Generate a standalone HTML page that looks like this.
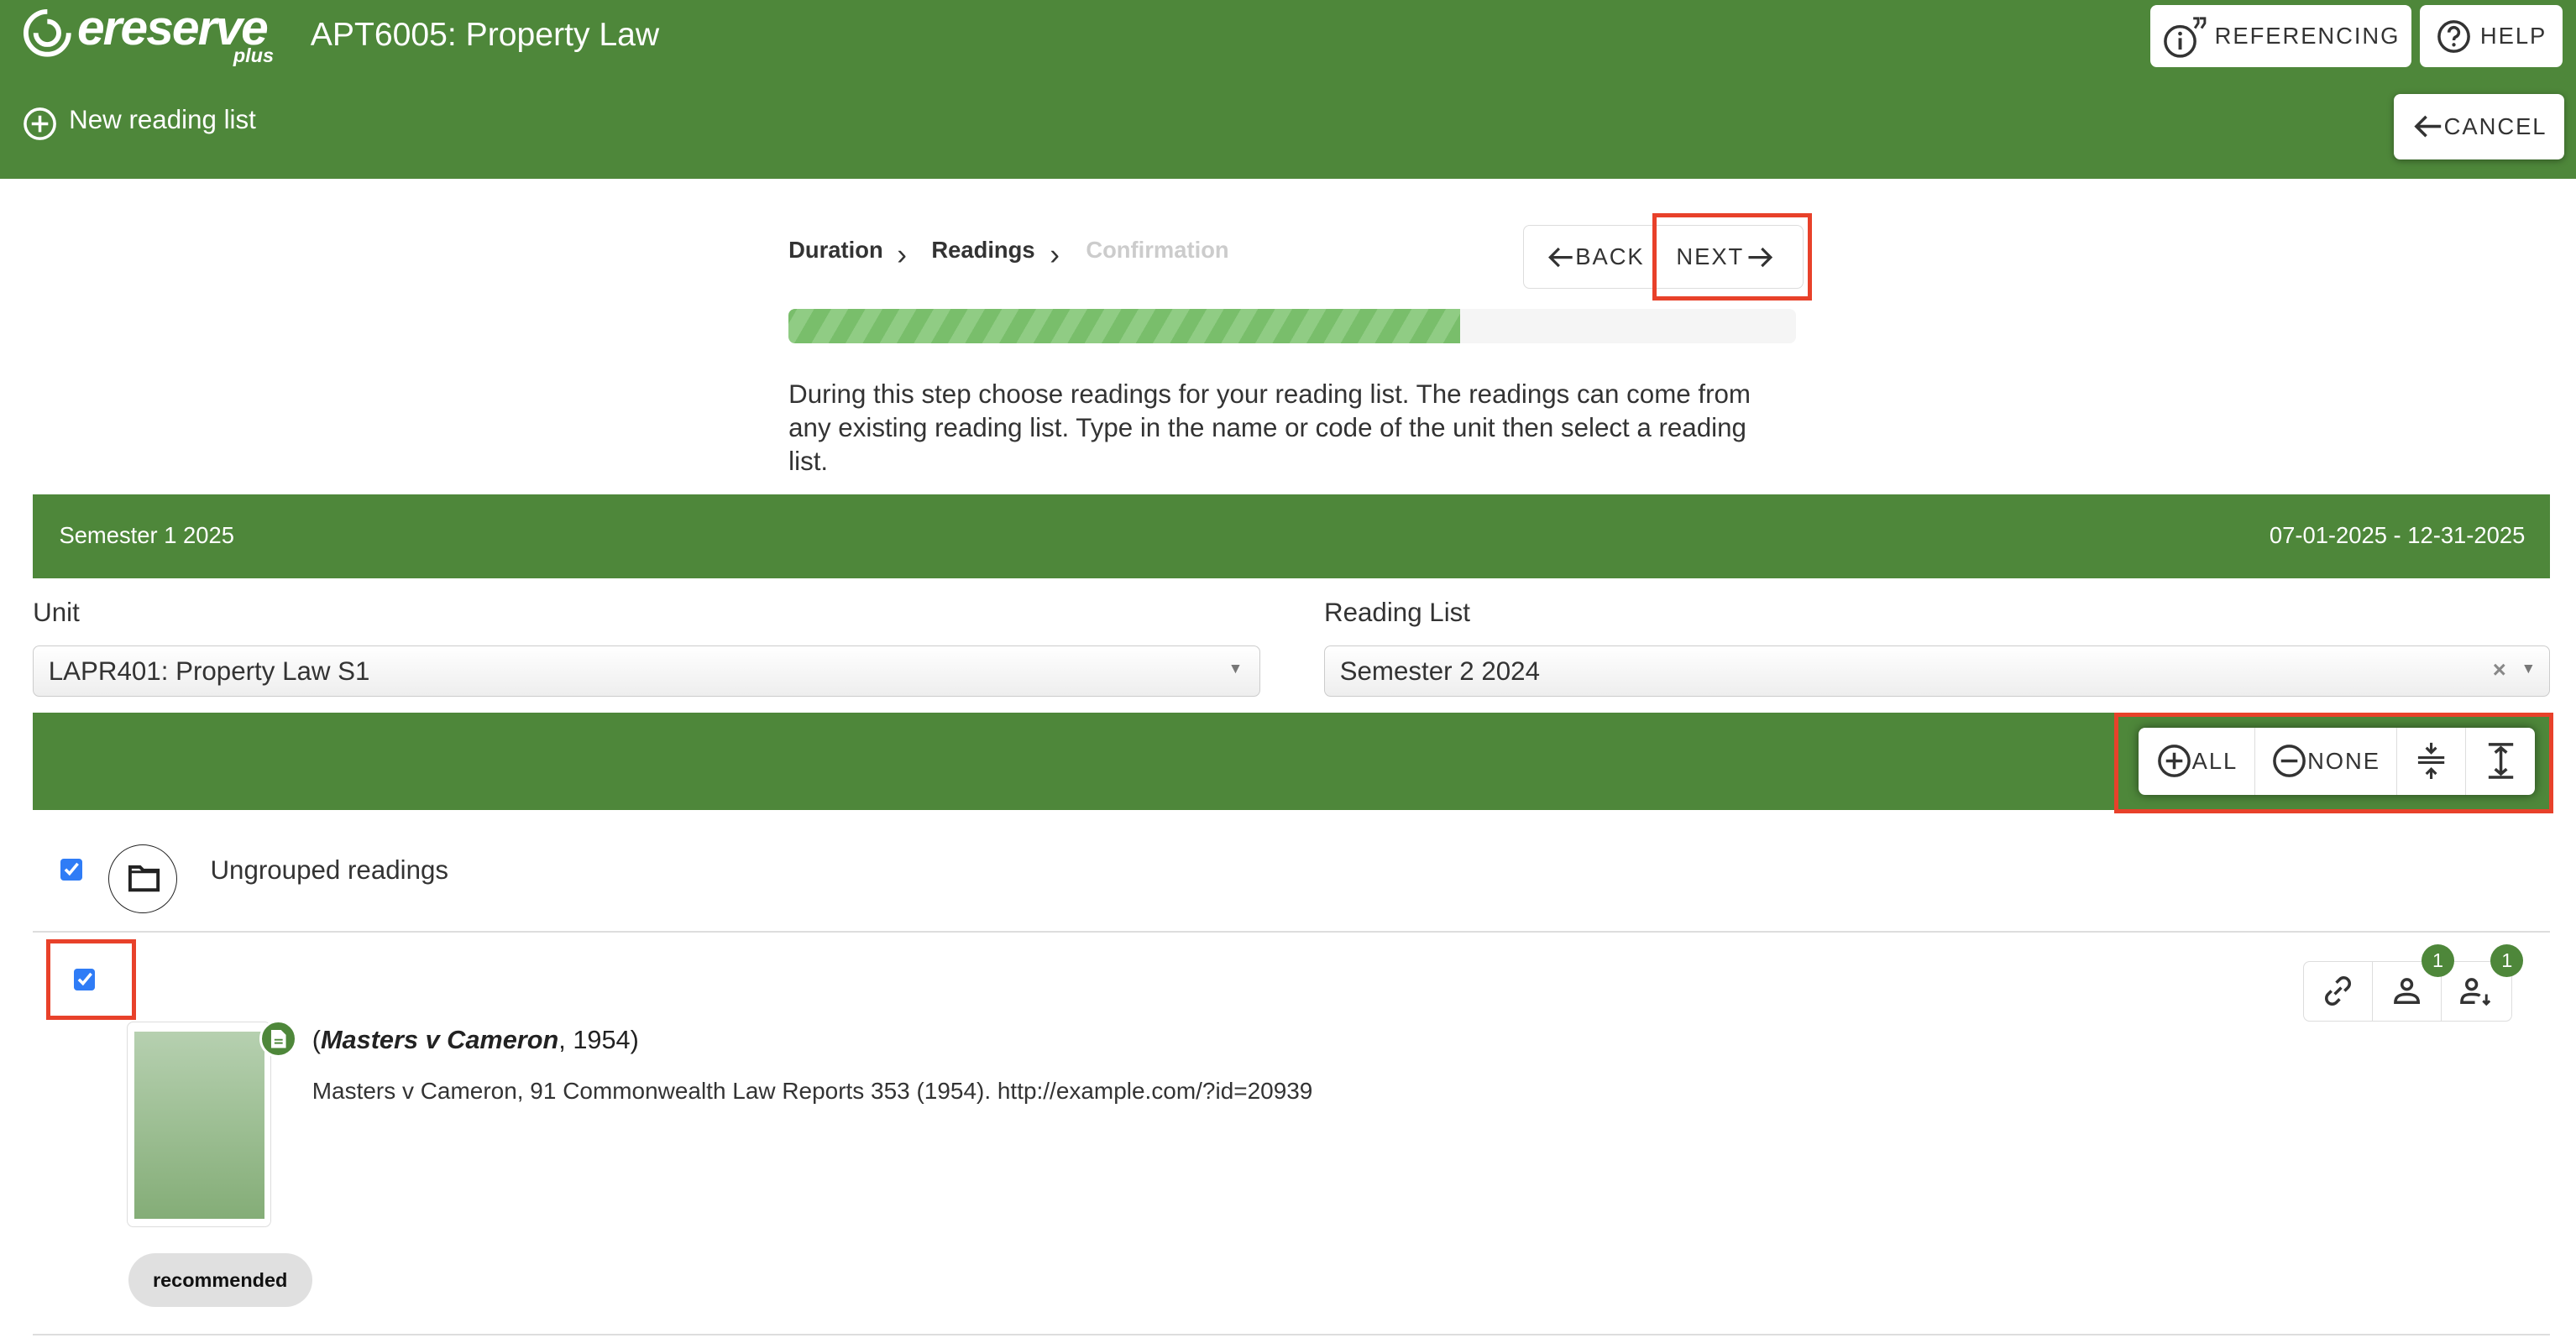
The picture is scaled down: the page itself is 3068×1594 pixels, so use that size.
<!DOCTYPE html>
<html><head><meta charset="utf-8">
<style>
*{box-sizing:border-box;margin:0;padding:0}
html,body{width:3068px;height:1594px;overflow:hidden;background:#fff}
#r{zoom:1.9566;width:1568px;height:815px;position:relative;font-family:"Liberation Sans",Arial,sans-serif;color:#222}
.a{position:absolute}
.g{background:#4e873a}
.btn{position:absolute;background:#fff;border-radius:4px;display:flex;align-items:center;justify-content:center;font-size:14px;letter-spacing:1px;color:#333;font-weight:500}
.red{position:absolute;border:3px solid #e8412a}
.cb{position:absolute;width:13px;height:13px;background:#2f7cf6;border-radius:2px}
.cb svg{position:absolute;left:1px;top:1px}
</style></head><body><div id="r">
<div class="a g" style="left:0;top:0;width:1568px;height:109px"></div>
<svg class="a" style="left:14px;top:4px" width="30" height="32" viewBox="0 0 30 32"><path d="M15 3a13 13 0 1 0 13 13" fill="none" stroke="#fff" stroke-width="3"/><path d="M15 9a7 7 0 1 1-7 7" fill="none" stroke="#fff" stroke-width="3"/></svg>
<div class="a" style="left:47px;top:0px;color:#fff;font-size:30px;font-style:italic;font-weight:bold;letter-spacing:-1px">ereserve</div>
<div class="a" style="left:142px;top:27px;color:#fff;font-size:12px;font-style:italic;font-weight:bold">plus</div>
<div class="a" style="left:189px;top:10px;color:#fff;font-size:20px">APT6005: Property Law</div>
<svg class="a" style="left:14px;top:65px" width="21" height="21" viewBox="0 0 21 21"><circle cx="10.5" cy="10.5" r="9" fill="none" stroke="#fff" stroke-width="1.8"/><path d="M10.5 5.5v10M5.5 10.5h10" stroke="#fff" stroke-width="1.8"/></svg>
<div class="a" style="left:42px;top:64px;color:#fff;font-size:16px">New reading list</div>
<div class="btn" style="left:1309px;top:3px;width:159px;height:38px"><svg width="28" height="28" viewBox="0 0 28 28" style="margin-right:4px"><circle cx="11" cy="17" r="9" fill="none" stroke="#333" stroke-width="1.8"/><path d="M11 15v7" stroke="#333" stroke-width="2"/><circle cx="11" cy="12.3" r="1.2" fill="#333"/><path d="M19 3h3v3l-2 3M23 3h3v3l-2 3" fill="none" stroke="#333" stroke-width="1.5"/></svg>REFERENCING</div>
<div class="btn" style="left:1473px;top:3px;width:87px;height:38px"><svg width="22" height="22" viewBox="0 0 22 22" style="margin-right:5px"><circle cx="11" cy="11" r="9" fill="none" stroke="#333" stroke-width="1.8"/><path d="M8 8.5a3 3 0 1 1 4 2.8c-.8.4-1 1-1 2" fill="none" stroke="#333" stroke-width="1.8"/><circle cx="11" cy="16" r="1.1" fill="#333"/></svg>HELP</div>
<div class="btn" style="left:1457px;top:57px;width:104px;height:40px;box-shadow:0 1px 4px rgba(0,0,0,.35)"><svg width="20" height="20" viewBox="0 0 20 20"><path d="M18 10H3M9 4l-6 6 6 6" fill="none" stroke="#333" stroke-width="1.8"/></svg>CANCEL</div>

<div class="a" style="left:480px;top:144px;font-size:14px;font-weight:bold;color:#333">Duration</div>
<div class="a" style="left:546px;top:145px;font-size:18px;color:#333">›</div>
<div class="a" style="left:567px;top:144px;font-size:14px;font-weight:bold;color:#333">Readings</div>
<div class="a" style="left:639px;top:145px;font-size:18px;color:#333">›</div>
<div class="a" style="left:661px;top:144px;font-size:14px;font-weight:bold;color:#ccc">Confirmation</div>
<div class="a" style="left:927px;top:137px;width:171px;height:39px;border:1px solid #ddd;border-radius:4px"></div>
<div class="btn" style="left:937px;top:140px;width:68px;height:33px;font-size:14px"><svg width="18" height="18" viewBox="0 0 20 20"><path d="M18 10H3M9 4l-6 6 6 6" fill="none" stroke="#333" stroke-width="1.8"/></svg>BACK</div>
<div class="btn" style="left:1012px;top:140px;width:78px;height:33px;font-size:14px">NEXT<svg width="20" height="18" viewBox="0 0 20 20"><path d="M2 10h15M11 4l6 6-6 6" fill="none" stroke="#333" stroke-width="1.8"/></svg></div>
<div class="red" style="left:1006px;top:130px;width:97px;height:53px"></div>
<div class="a" style="left:480px;top:188px;width:613px;height:21px;background:#f5f5f5;border-radius:4px"></div>
<div class="a" style="left:480px;top:188px;width:409px;height:21px;border-radius:4px 0 0 4px;background:repeating-linear-gradient(-60deg,#79be6b 0 9px,#90cc84 9px 18px)"></div>
<div class="a" style="left:480px;top:230px;width:602px;font-size:16px;line-height:20.5px;color:#333">During this step choose readings for your reading list. The readings can come from any existing reading list. Type in the name or code of the unit then select a reading list.</div>

<div class="a g" style="left:20px;top:301px;width:1532px;height:51px"></div>
<div class="a" style="left:36px;top:318px;color:#fff;font-size:14px">Semester 1 2025</div>
<div class="a" style="right:31px;top:318px;color:#fff;font-size:14px">07-01-2025 - 12-31-2025</div>
<div class="a" style="left:20px;top:364px;font-size:16px;color:#333">Unit</div>
<div class="a" style="left:806px;top:364px;font-size:16px;color:#333">Reading List</div>
<div class="a" style="left:20px;top:393px;width:747px;height:31px;border:1px solid #ccc;border-radius:4px;background:linear-gradient(#fff,#eee);padding:6px 9px;font-size:16px;color:#333">LAPR401: Property Law S1<span style="position:absolute;right:10px;top:8px;font-size:9px;color:#777">▼</span></div>
<div class="a" style="left:806px;top:393px;width:746px;height:31px;border:1px solid #ccc;border-radius:4px;background:linear-gradient(#fff,#eee);padding:6px 9px;font-size:16px;color:#333">Semester 2 2024<span style="position:absolute;right:26px;top:6px;font-size:14px;color:#888;font-weight:bold">×</span><span style="position:absolute;right:8px;top:8px;font-size:9px;color:#777">▼</span></div>

<div class="a g" style="left:20px;top:434px;width:1532px;height:59px"></div>
<div class="a" style="left:1302px;top:443px;width:241px;height:41px;background:#fff;border-radius:4px;box-shadow:0 0 6px rgba(0,0,0,.5);display:flex;font-size:14px;color:#333;letter-spacing:1px">
<div style="width:71px;display:flex;align-items:center;justify-content:center;border-right:1px solid #ddd"><svg width="22" height="22" viewBox="0 0 22 22"><circle cx="11" cy="11" r="9" fill="none" stroke="#333" stroke-width="1.8"/><path d="M11 6v10M6 11h10" stroke="#333" stroke-width="1.8"/></svg>ALL</div>
<div style="width:86px;display:flex;align-items:center;justify-content:center;border-right:1px solid #ddd"><svg width="22" height="22" viewBox="0 0 22 22"><circle cx="11" cy="11" r="9" fill="none" stroke="#333" stroke-width="1.8"/><path d="M6 11h10" stroke="#333" stroke-width="1.8"/></svg>NONE</div>
<div style="width:42px;display:flex;align-items:center;justify-content:center;border-right:1px solid #ddd"><svg width="20" height="26" viewBox="0 0 20 26"><path d="M2 11h16M2 14h16M10 2v6M7 5l3 3 3-3M10 24v-6M7 21l3-3 3 3" fill="none" stroke="#333" stroke-width="1.6"/></svg></div>
<div style="flex:1;display:flex;align-items:center;justify-content:center"><svg width="20" height="26" viewBox="0 0 20 26"><path d="M3 3h15M3 23h15M10.5 5v16M7 8l3.5-3 3.5 3M7 18l3.5 3 3.5-3" fill="none" stroke="#333" stroke-width="1.8"/></svg></div>
</div>
<div class="red" style="left:1287px;top:434px;width:267px;height:61px"></div>

<div class="cb" style="left:37px;top:523px"><svg width="11" height="11" viewBox="0 0 11 11"><path d="M2 5.5l2.5 2.5 5-6" fill="none" stroke="#fff" stroke-width="1.8"/></svg></div>
<div class="a" style="left:66px;top:514px;width:42px;height:42px;border:1px solid #222;border-radius:50%"></div>
<svg class="a" style="left:77px;top:525px" width="21" height="20" viewBox="0 0 21 20"><path d="M2 3h6l2 2h9v12H2z" fill="none" stroke="#222" stroke-width="2"/><path d="M2 6h17" stroke="#222" stroke-width="1.5"/></svg>
<div class="a" style="left:128px;top:521px;font-size:16px;color:#333">Ungrouped readings</div>
<div class="a" style="left:20px;top:567px;width:1532px;height:1px;background:#ddd"></div>

<div class="cb" style="left:45px;top:590px"><svg width="11" height="11" viewBox="0 0 11 11"><path d="M2 5.5l2.5 2.5 5-6" fill="none" stroke="#fff" stroke-width="1.8"/></svg></div>
<div class="red" style="left:28px;top:572px;width:55px;height:49px"></div>
<div class="a" style="left:77px;top:622px;width:88px;height:125px;border:1px solid #ddd;border-radius:4px;background:#fff"></div>
<div class="a" style="left:82px;top:628px;width:79px;height:114px;background:linear-gradient(#b6d0b0,#84ad77)"></div>
<div class="a" style="left:158px;top:621px;width:23px;height:23px;border-radius:50%;background:#4e873a;border:2px solid #fff"></div>
<svg class="a" style="left:164px;top:626px" width="11" height="13" viewBox="0 0 11 13"><path d="M1 1h6l3 3v8H1z" fill="#fff"/><path d="M3 7h5M3 9h5" stroke="#4e873a" stroke-width="1"/></svg>
<div class="a" style="left:190px;top:624px;font-size:15.7px;color:#222">(<b><i>Masters v Cameron</i></b>, 1954)</div>
<div class="a" style="left:190px;top:656px;font-size:14.3px;color:#333">Masters v Cameron, 91 Commonwealth Law Reports 353 (1954). http://example.com/?id=20939</div>
<div class="a" style="left:78px;top:763px;width:112px;height:33px;border-radius:17px;background:#e0e0e0;font-size:12px;font-weight:bold;display:flex;align-items:center;justify-content:center;color:#111">recommended</div>
<div class="a" style="left:20px;top:812px;width:1532px;height:1px;background:#ddd"></div>

<div class="a" style="left:1402px;top:585px;width:127px;height:37px;border:1px solid #ddd;border-radius:4px;display:flex">
<div style="width:42px;border-right:1px solid #ddd;display:flex;align-items:center;justify-content:center"><svg width="22" height="22" viewBox="0 0 22 22"><path d="M9 13l4-4M10 6l2-2a3.5 3.5 0 0 1 5 5l-2 2M12 16l-2 2a3.5 3.5 0 0 1-5-5l2-2" fill="none" stroke="#333" stroke-width="1.8"/></svg></div>
<div style="width:42px;border-right:1px solid #ddd;display:flex;align-items:center;justify-content:center"><svg width="20" height="20" viewBox="0 0 20 20"><circle cx="10" cy="6" r="3" fill="none" stroke="#333" stroke-width="1.8"/><path d="M3 17c0-4 3-5 7-5s7 1 7 5z" fill="none" stroke="#333" stroke-width="1.8"/></svg></div>
<div style="flex:1;display:flex;align-items:center;justify-content:center"><svg width="22" height="20" viewBox="0 0 22 20"><circle cx="8" cy="6" r="3" fill="none" stroke="#333" stroke-width="1.8"/><path d="M13 13c-1-1-3-1-5-1-4 0-6 1-6 5h8" fill="none" stroke="#333" stroke-width="1.8"/><path d="M17 12v6M15 16l2 2 2-2" fill="none" stroke="#333" stroke-width="1.5"/></svg></div>
</div>
<div class="a" style="left:1474px;top:575px;width:20px;height:20px;border-radius:50%;background:#4e873a;color:#fff;font-size:12px;display:flex;align-items:center;justify-content:center">1</div>
<div class="a" style="left:1516px;top:575px;width:20px;height:20px;border-radius:50%;background:#4e873a;color:#fff;font-size:12px;display:flex;align-items:center;justify-content:center">1</div>
</div></body></html>
